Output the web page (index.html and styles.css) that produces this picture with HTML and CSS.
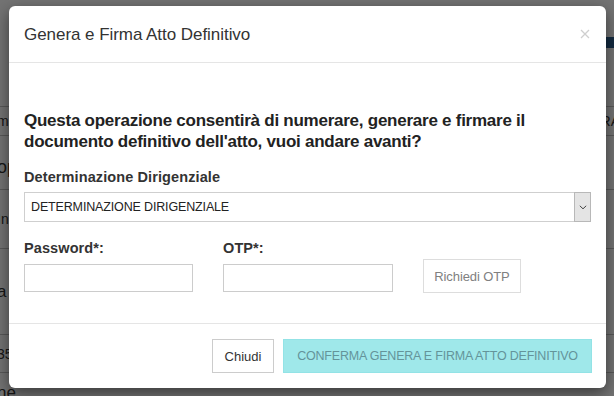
FILE: index.html
```html
<!DOCTYPE html>
<html lang="it">
<head>
<meta charset="utf-8">
<title>Genera e Firma Atto Definitivo</title>
<link rel="stylesheet" href="styles.css">
</head>
<body>
<div class="page">
  <div class="pg-bar"><span class="pg-blue"></span></div>
  <div class="pg-row pg-head"><span class="pg-l">m</span><span class="pg-r">RA</span></div>
  <div class="pg-row pg-big"><span class="pg-l">op</span></div>
  <div class="pg-row pg-mid"><span class="pg-l">In</span></div>
  <div class="pg-row pg-tall"><span class="pg-l pg-l-big">a</span></div>
  <div class="pg-row pg-small"><span class="pg-l">35</span></div>
  <div class="pg-row pg-end"><span class="pg-l pg-l-big">ne</span></div>
</div>
<div class="backdrop"></div>

<div class="modal" role="dialog" aria-labelledby="mtitle">
  <div class="modal-header">
    <h4 class="modal-title" id="mtitle">Genera e Firma Atto Definitivo</h4>
    <button class="close" type="button" aria-label="Chiudi">
      <svg width="10" height="10" viewBox="0 0 10 10"><path d="M1 1 L9 9 M9 1 L1 9" stroke="#cfcfcf" stroke-width="1.3" fill="none"/></svg>
    </button>
  </div>
  <div class="modal-body">
    <h4 class="question">Questa operazione consentirà di numerare, generare e firmare il<br>documento definitivo dell'atto, vuoi andare avanti?</h4>
    <div class="form-label">Determinazione Dirigenziale</div>
    <div class="select">
      <span class="select-text">DETERMINAZIONE DIRIGENZIALE</span>
      <span class="select-arrow">
        <svg width="8" height="5" viewBox="0 0 8 5"><path d="M0.8 0.8 L4 3.8 L7.2 0.8" stroke="#444" stroke-width="1" fill="none"/></svg>
      </span>
    </div>
    <div class="cred">
      <div class="field field-pwd">
        <div class="form-label">Password*:</div>
        <input class="input" type="password">
      </div>
      <div class="field field-otp">
        <div class="form-label">OTP*:</div>
        <input class="input" type="text">
      </div>
      <button class="btn btn-otp" type="button">Richiedi OTP</button>
    </div>
  </div>
  <div class="modal-footer">
    <button class="btn btn-close" type="button">Chiudi</button>
    <button class="btn btn-confirm" type="button">CONFERMA GENERA E FIRMA ATTO DEFINITIVO</button>
  </div>
</div>
</body>
</html>
```

FILE: styles.css
```css
html, body {
  margin: 0;
  padding: 0;
}
body {
  width: 614px;
  height: 396px;
  overflow: hidden;
  position: relative;
  background: #ffffff;
  font-family: "Liberation Sans", Arial, sans-serif;
  color: #333;
}

/* ---- page behind the dialog ---- */
.page {
  display: flex;
  flex-direction: column;
  font-size: 14px;
  color: #333;
}
.pg-bar {
  height: 11px;
  margin-top: 37px;
  display: flex;
  justify-content: flex-end;
}
.pg-blue {
  width: 9px;
  background: #2c5f8f;
}
.pg-row {
  display: flex;
  justify-content: space-between;
  align-items: center;
  border-bottom: 1px solid #c4c4c4;
}
.pg-l {
  margin-left: -3px;
}
.pg-l-big {
  font-size: 17px;
}
.pg-r {
  margin-right: -6px;
}
.pg-head {
  margin-top: 58px;
  height: 28px;
  border-top: 1px solid #c4c4c4;
}
.pg-big {
  height: 54px;
  font-size: 18px;
  padding-top: 21px;
  box-sizing: border-box;
  align-items: flex-start;
}
.pg-mid {
  height: 58px;
}
.pg-tall {
  height: 85px;
}
.pg-small {
  height: 37px;
}
.pg-end {
  border-bottom: 0;
  height: 40px;
}
.backdrop {
  position: absolute;
  inset: 0;
  background: rgba(0, 0, 0, 0.55);
}

/* ---- dialog ---- */
.modal {
  position: absolute;
  top: 6px;
  left: 9px;
  width: 597px;
  box-sizing: border-box;
  background: #fff;
  border-radius: 6px;
  box-shadow: 0 5px 15px rgba(0, 0, 0, 0.5);
}
.modal-header {
  display: flex;
  align-items: flex-start;
  padding: 19px 16px 17px 15px;
  border-bottom: 1px solid #e5e5e5;
}
.modal-title {
  margin: 0;
  font-size: 17px;
  font-weight: normal;
  line-height: 20px;
  color: #333;
  letter-spacing: -0.05px;
}
.close {
  margin: 4px 0 0 auto;
  padding: 0;
  border: 0;
  background: none;
  width: 10px;
  height: 10px;
  display: flex;
}
.modal-body {
  padding: 15px;
}
.question {
  margin: 32px 0 15px;
  font-size: 17px;
  line-height: 21px;
  font-weight: bold;
  color: #222;
  letter-spacing: -0.25px;
}
.form-label {
  font-size: 14.5px;
  line-height: 20px;
  font-weight: bold;
  color: #333;
  letter-spacing: 0.1px;
}
.select {
  margin-top: 5px;
  height: 30px;
  box-sizing: border-box;
  border: 1px solid #cfcfcf;
  display: flex;
  align-items: stretch;
}
.select-text {
  flex: 1;
  display: flex;
  align-items: center;
  padding-left: 6px;
  font-size: 12.5px;
  letter-spacing: -0.15px;
  color: #222;
}
.select-arrow {
  width: 17px;
  margin: -1px -1px -1px 0;
  box-sizing: border-box;
  border: 1px solid #b8b8b8;
  background: #e4e4e4;
  display: flex;
  align-items: center;
  justify-content: center;
}
.cred {
  margin: 16px 0 15px;
  display: flex;
  align-items: flex-start;
  gap: 30px;
}
.field {
  display: flex;
  flex-direction: column;
}
.field-pwd {
  width: 169px;
}
.field-otp {
  width: 170px;
}
.input {
  margin: 6px 0 0;
  height: 28px;
  box-sizing: border-box;
  border: 1px solid #cccccc;
  padding: 0 6px;
  font: inherit;
  outline: none;
  background: #fff;
}
.btn {
  font-family: inherit;
  height: 34px;
  box-sizing: border-box;
  background: #fff;
  cursor: pointer;
}
.btn-otp {
  margin-top: 21px;
  width: 98px;
  padding: 0;
  border: 1px solid #dddddd;
  color: #808080;
  font-size: 13px;
  letter-spacing: -0.1px;
}
.modal-footer {
  display: flex;
  justify-content: flex-end;
  gap: 9px;
  padding: 15px 14px 15px 15px;
  border-top: 1px solid #e5e5e5;
}
.btn-close {
  width: 62px;
  padding: 0;
  border: 1px solid #cccccc;
  color: #333;
  font-size: 13px;
}
.btn-confirm {
  width: 309px;
  padding: 0;
  border: 1px solid #93e3e6;
  background: #9fe8ea;
  color: #64949a;
  font-size: 12.5px;
  letter-spacing: -0.2px;
}
```
